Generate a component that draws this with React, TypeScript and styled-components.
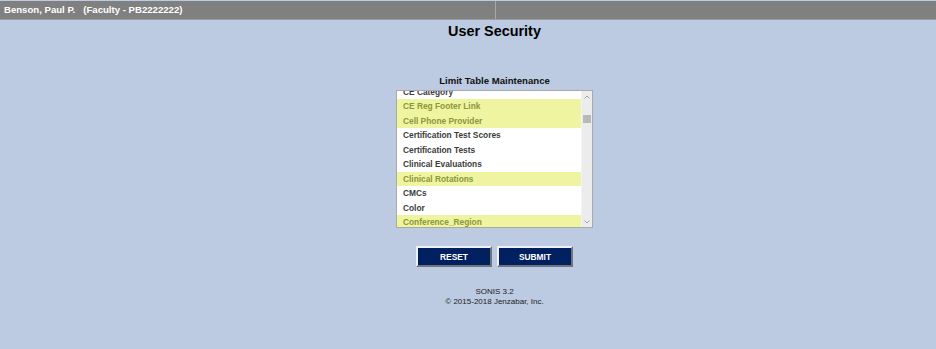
import styled, { createGlobalStyle } from 'styled-components'

const GlobalStyle = createGlobalStyle`
    body {
        margin: 0;
        background: #bccbe1;
        font-family: 'Liberation Sans', Arial, sans-serif;
    }
`

const items = [
    { label: 'CE Category', marked: false },
    { label: 'CE Reg Footer Link', marked: true },
    { label: 'Cell Phone Provider', marked: true },
    { label: 'Certification Test Scores', marked: false },
    { label: 'Certification Tests', marked: false },
    { label: 'Clinical Evaluations', marked: false },
    { label: 'Clinical Rotations', marked: true },
    { label: 'CMCs', marked: false },
    { label: 'Color', marked: false },
    { label: 'Conference_Region', marked: true },
]

const Chevron = ({ up }: { up?: boolean }) => (
    <svg width="6" height="4" viewBox="0 0 6 4">
        <path
            d={up ? 'M0.5 3.5 L3 1 L5.5 3.5' : 'M0.5 0.5 L3 3 L5.5 0.5'}
            fill="none"
            stroke="#a3a3a3"
            strokeWidth="1"
        />
    </svg>
)

export default function App() {
    return (
        <>
            <GlobalStyle />
            <STopBar>
                <SBarCell>Benson, Paul P.&nbsp;&nbsp;&nbsp;(Faculty - PB2222222)</SBarCell>
                <SBarCell />
            </STopBar>
            <SMain>
                <STitle>User Security</STitle>
                <SCaption>Limit Table Maintenance</SCaption>
                <SListBox>
                    <SViewport>
                        <SRows>
                            {items.map((item) => (
                                <SRow key={item.label} $marked={item.marked}>
                                    {item.label}
                                </SRow>
                            ))}
                        </SRows>
                    </SViewport>
                    <SScrollbar>
                        <SArrow>
                            <Chevron up />
                        </SArrow>
                        <STrack>
                            <SThumb />
                        </STrack>
                        <SArrow>
                            <Chevron />
                        </SArrow>
                    </SScrollbar>
                </SListBox>
                <SButtons>
                    <SButton>RESET</SButton>
                    <SButton>SUBMIT</SButton>
                </SButtons>
                <SFooter>
                    <div>SONIS 3.2</div>
                    <div>© 2015-2018 Jenzabar, Inc.</div>
                </SFooter>
            </SMain>
        </>
    )
}

const STopBar = styled.div`
    display: grid;
    grid-template-columns: 495px 1fr;
    gap: 1px;
    margin-top: 1px;
    background: #a8a8a8;
    border-bottom: 1px solid #9c9c9c;
`
const SBarCell = styled.div`
    height: 18px;
    line-height: 18px;
    background: #808080;
    color: #ffffff;
    font-size: 9.6px;
    font-weight: bold;
    padding-left: 4px;
    white-space: nowrap;
`
const SMain = styled.div`
    display: flex;
    flex-direction: column;
    align-items: center;
    padding-left: 53px;
`
const STitle = styled.h1`
    margin: 2px 0 0;
    font-size: 14.4px;
    line-height: 18px;
    color: #000;
`
const SCaption = styled.div`
    margin-top: 35px;
    font-size: 9.6px;
    line-height: 12px;
    font-weight: bold;
    color: #111;
`
const SListBox = styled.div`
    display: flex;
    margin-top: 3px;
    width: 195px;
    height: 136px;
    border: 1px solid #a9a9a9;
    background: #fff;
`
const SViewport = styled.div`
    flex: 1;
    overflow: hidden;
`
const SRows = styled.div`
    margin-top: -6.5px;
`
const SRow = styled.div<{ $marked: boolean }>`
    height: 14.5px;
    line-height: 14.5px;
    padding-left: 6px;
    font-size: 8.35px;
    font-weight: bold;
    white-space: nowrap;
    background: ${(p) => (p.$marked ? '#eef4a0' : '#ffffff')};
    color: ${(p) => (p.$marked ? '#8b973b' : '#3c3c3c')};
`
const SScrollbar = styled.div`
    width: 10px;
    display: flex;
    flex-direction: column;
    background: #ececec;
    border-left: 1px solid #f4f4f4;
`
const SArrow = styled.div`
    height: 11px;
    display: flex;
    align-items: center;
    justify-content: center;
`
const STrack = styled.div`
    flex: 1;
`
const SThumb = styled.div`
    margin: 13px 1px 0;
    height: 8px;
    background: #b8b8b8;
`
const SButtons = styled.div`
    display: flex;
    gap: 5px;
    margin-top: 18px;
`
const SButton = styled.button`
    width: 76px;
    height: 21px;
    padding: 0;
    background: #002060;
    color: #fff;
    font-family: 'Liberation Sans', Arial, sans-serif;
    font-size: 8.4px;
    font-weight: bold;
    border: 2px solid;
    border-color: #eef0f4 #6f7480 #6f7480 #eef0f4;
    cursor: pointer;
`
const SFooter = styled.div`
    margin-top: 20px;
    font-size: 8px;
    line-height: 10px;
    color: #222;
    text-align: center;
`
